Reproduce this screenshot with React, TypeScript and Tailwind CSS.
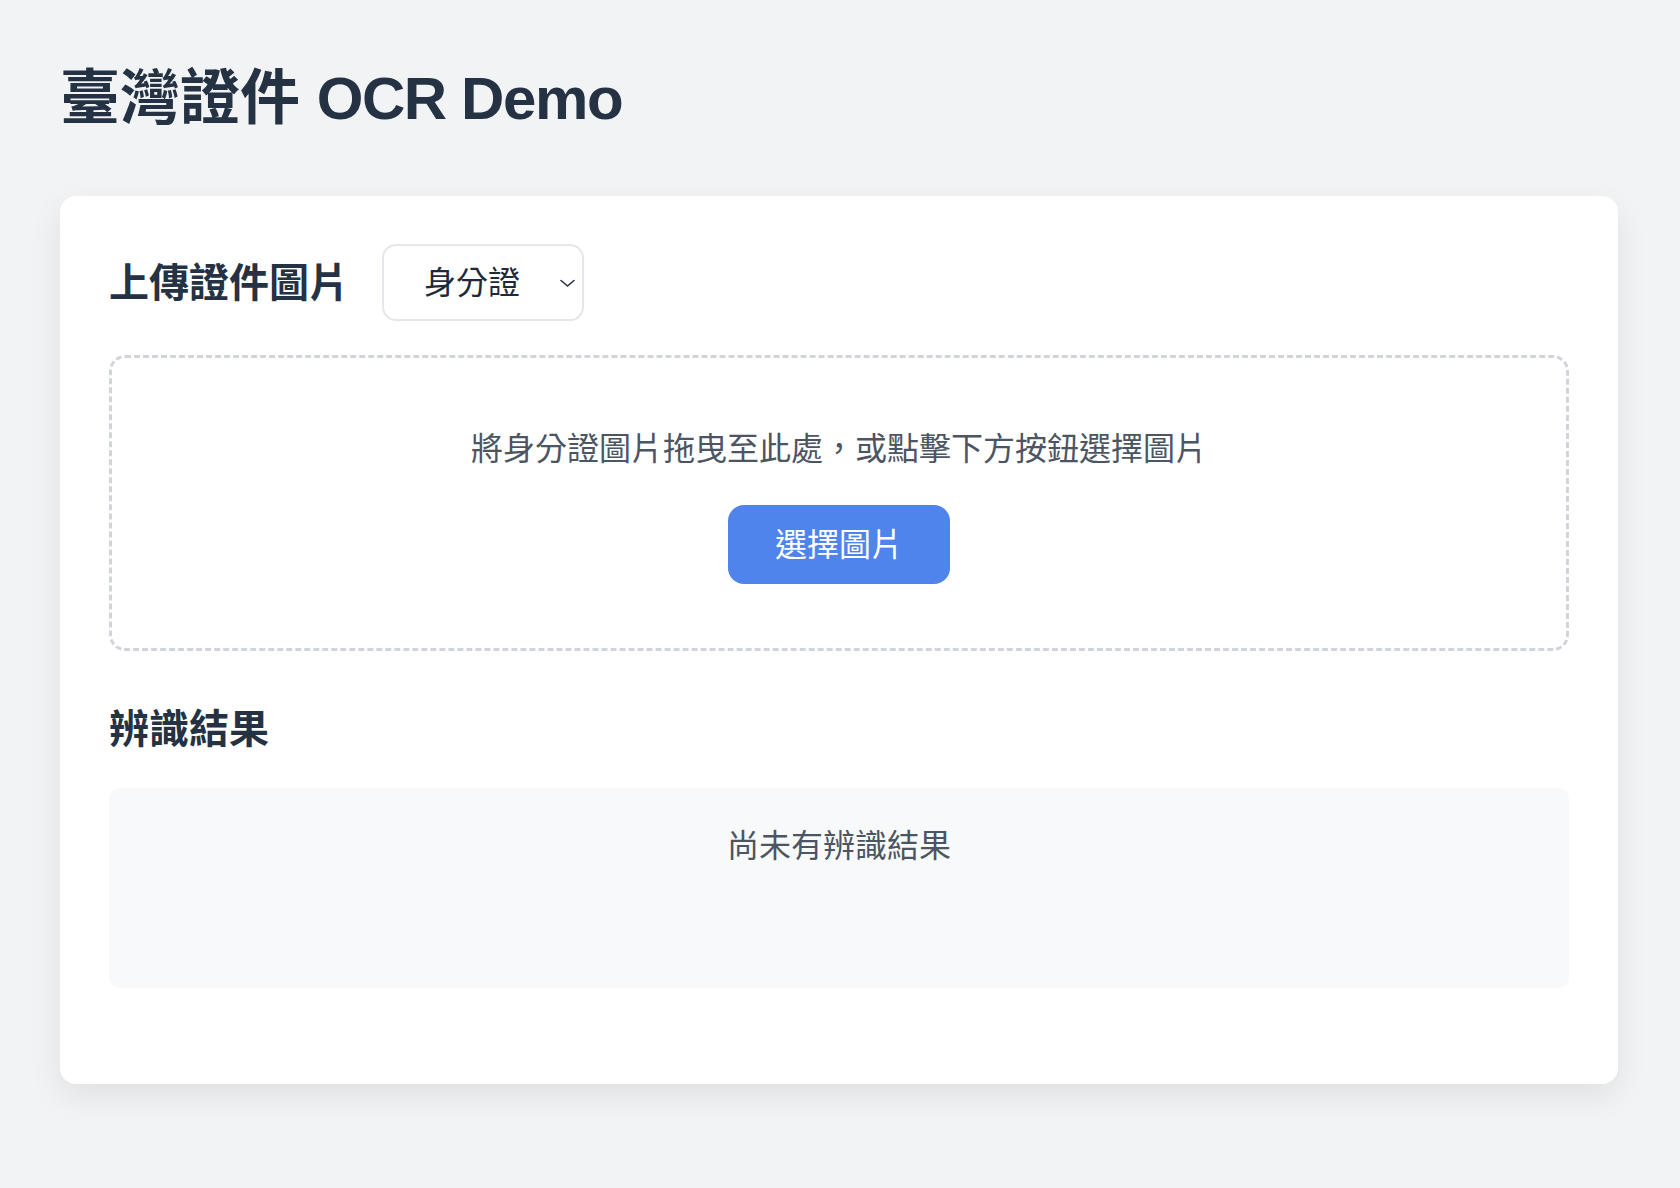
const cjk = "font-['Liberation_Sans','Noto_Sans_CJK_TC',sans-serif]";

function Chevron() {
  return (
    <svg
      className="pointer-events-none absolute right-[8px] top-1/2 h-[10px] w-[17px] -translate-y-1/2 text-[#1f2937]"
      viewBox="0 0 17 10"
      fill="none"
      stroke="currentColor"
      strokeWidth="1.5"
      strokeLinecap="round"
      strokeLinejoin="round"
    >
      <path d="M2 2.5l6.5 5.5 6.5-5.5" />
    </svg>
  );
}

export default function App() {
  return (
    <div className={`min-h-[1188px] bg-[#f2f3f5] pl-[60px] pt-[63px] pb-[100px] ${cjk}`}>
      {/* Page title */}
      <h1 className="text-[60px] font-bold leading-[71px] text-[#243244]">
        臺灣證件 <span className="tracking-[-1.4px]">OCR Demo</span>
      </h1>

      {/* Main card */}
      <div className="mt-[62px] w-[1558px] rounded-[16px] bg-white px-[49px] pt-[48px] pb-[96px] shadow-[0_12px_32px_rgba(0,0,0,0.08)]">
        {/* Upload header */}
        <div className="flex items-center gap-[33px]">
          <h2 className="text-[40px] font-bold leading-[48px] text-[#243244]">上傳證件圖片</h2>
          <div className="relative">
            <select
              defaultValue="id"
              className={`h-[77px] w-[202px] appearance-none rounded-[14px] border-2 border-[#e5e7eb] bg-white pl-[40px] pr-[30px] text-[32px] text-[#1f2937] outline-none ${cjk}`}
            >
              <option value="id">身分證</option>
              <option value="health">健保卡</option>
              <option value="license">駕照</option>
            </select>
            <Chevron />
          </div>
        </div>

        {/* Drop zone */}
        <div className="mt-[34px] flex flex-col items-center rounded-[16px] border-[3px] border-dashed border-[#d1d5db] pt-[66px] pb-[64px]">
          <p className="text-[32px] leading-[50px] text-[#4b5563]">
            將身分證圖片拖曳至此處，或點擊下方按鈕選擇圖片
          </p>
          <button className="mt-[31px] h-[79px] rounded-[16px] bg-[#4f84ec] px-[47px] text-[32px] text-white">
            選擇圖片
          </button>
        </div>

        {/* Result */}
        <h2 className="mt-[54px] text-[40px] font-bold leading-[48px] text-[#243244]">辨識結果</h2>
        <div className="mt-[35px] min-h-[200px] rounded-[10px] bg-[#f8f9fb] pt-[33px] text-center">
          <p className="text-[32px] leading-[50px] text-[#4b5563]">尚未有辨識結果</p>
        </div>
      </div>
    </div>
  );
}
